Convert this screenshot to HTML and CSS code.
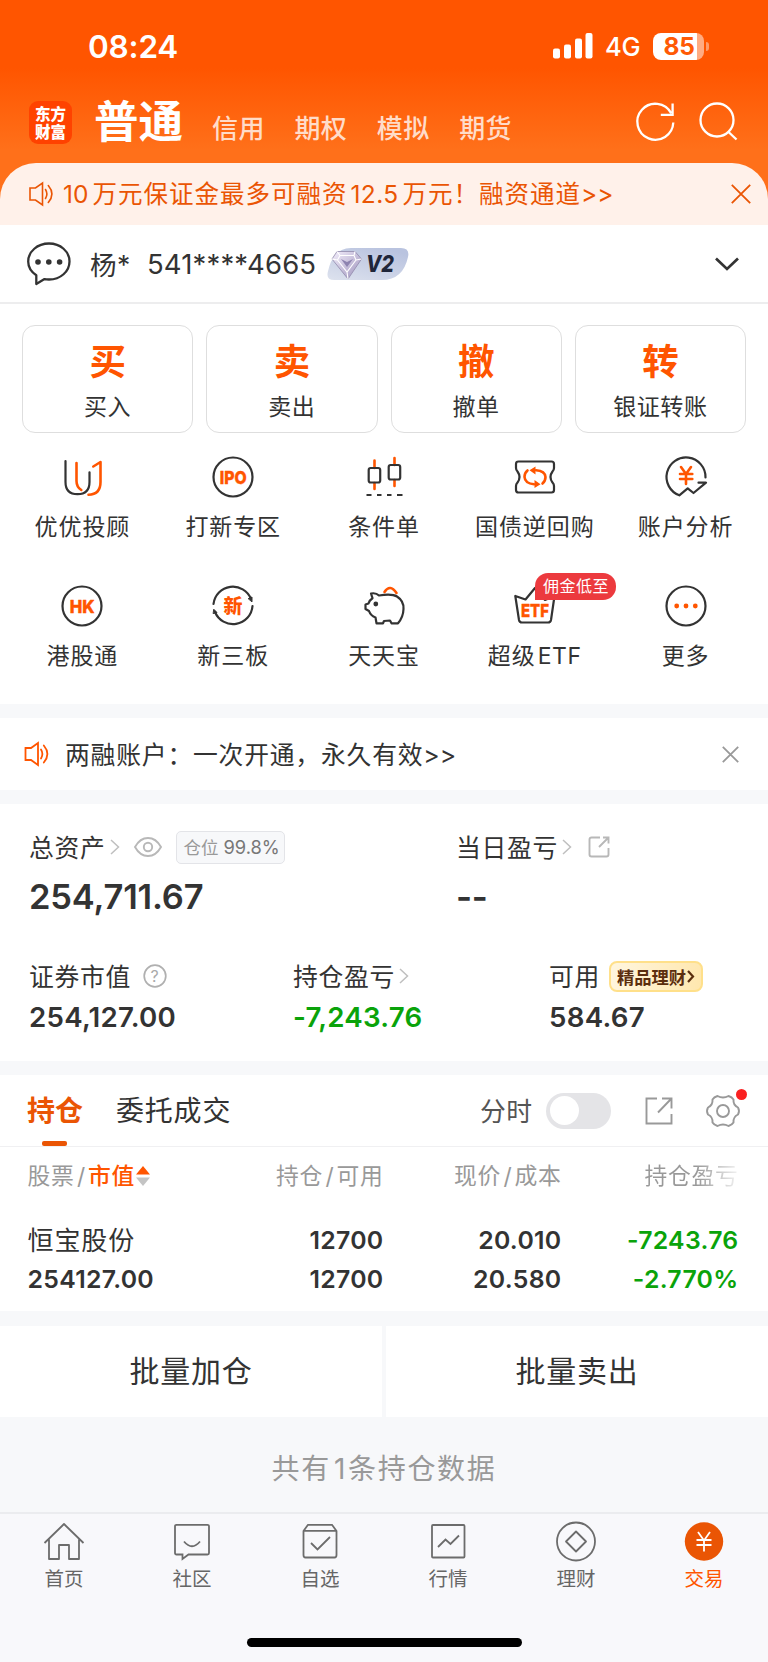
FILE: index.html
```html
<!DOCTYPE html>
<html lang="zh-CN">
<head>
<meta charset="utf-8">
<title>交易</title>
<link rel="stylesheet" href="styles.css">
</head>
<body>
<div class="app">
  <header class="top">
    <div class="status">
      <span class="clock">08:24</span>
      <svg class="signal" width="40" height="26" viewBox="0 0 40 26" fill="#fff"><rect x="0" y="15.5" width="7" height="10" rx="2"/><rect x="11" y="11.5" width="7" height="14" rx="2"/><rect x="22" y="5.5" width="7" height="20" rx="2"/><rect x="32.5" y="0" width="7" height="25.500" rx="2"/></svg>
      <span class="net">4G</span>
      <div class="battery"><span class="level">85</span></div>
      <span class="nub"></span>
    </div>
    <nav class="accounts">
      <div class="logo">东方<br>财富</div>
      <span class="acct-main">普通</span>
      <span class="acct">信用</span><span class="acct">期权</span><span class="acct">模拟</span><span class="acct">期货</span>
      <svg class="refresh" width="40" height="42" viewBox="0 0 40 42" fill="none" stroke="#fff" stroke-width="2.3"><path d="M37.300 21.500A18 18 0 1 1 35.200 12.300M36.600 2.500V13.800H24.800"/></svg>
      <svg class="search" width="40" height="42" viewBox="0 0 40 42" fill="none" stroke="#fff" stroke-width="2.3"><circle cx="18" cy="19" r="16.500"/><path d="M29 30.500L37.500 38.500"/></svg>
    </nav>
    <div class="promo">
      <svg class="speaker" width="25" height="24" viewBox="0 0 25 24" fill="none" stroke="#ea5504" stroke-width="1.600"><path d="M1 6H6.500L13.500 1V23L6.500 18H1Z"/><path d="M16.500 7.500Q19.300 12 16.500 16.500M19.300 3.500Q26.500 12 19.300 20.500" stroke-linecap="round"/></svg>
      <span class="promo-text"><span class="num">10</span>万元保证金最多可融资<span class="num mid">12.5</span>万元！融资通道<span class="arrows">&gt;&gt;</span></span>
      <svg class="promo-close" width="20" height="20" viewBox="0 0 20 20" stroke="#ea5504" stroke-width="1.800"><path d="M.8.8L19.200 19.200M19.200.8L.8 19.200"/></svg>
    </div>
  </header>

  <section class="user">
    <svg width="44" height="44" viewBox="0 0 44 44" fill="none" stroke="#333" stroke-width="2.300" stroke-linejoin="round"><path d="M9.300 33.300C4.500 30 1.200 25 1.200 19.500C1.200 9.500 10.500 1.500 22 1.500S42.500 9.500 42.500 19.500S33.500 37.500 22 37.500C20.200 37.500 18.700 37.400 17.500 37.100L9.300 42Z"/><g fill="#333" stroke="none"><circle cx="11" cy="20" r="2.800"/><circle cx="21.800" cy="20" r="2.800"/><circle cx="32.600" cy="20" r="2.800"/></g></svg>
    <span class="user-name">杨*</span>
    <span class="user-id">541****4665</span>
    <svg class="vip" width="82" height="34" viewBox="0 0 82 34">
      <defs>
        <linearGradient id="vipbg" x1="0" y1="1" x2=".7" y2="0"><stop offset="0" stop-color="#dde2ee"/><stop offset="1" stop-color="#b9c3df"/></linearGradient>
        <linearGradient id="gem" x1="0" y1="0" x2="1" y2="1"><stop offset="0" stop-color="#f4effc"/><stop offset="1" stop-color="#9c91bb"/></linearGradient>
      </defs>
      <path d="M24 1H74Q83 1 81 10Q76 33 55 33H7Q-1 33 .8 25Q6 1 24 1Z" fill="url(#vipbg)"/>
      <path d="M10 4.500H28L34.500 12L21 32L5 12Z" fill="url(#gem)" stroke="#9189ab" stroke-width=".8"/>
      <path d="M10 4.500L13 8.500H27L28 4.500M13 8.500L10.500 13L20 25L29 13L27 8.500M5 12L10.500 13M34.500 12L29 13M20 25L21 32" fill="none" stroke="#fff" stroke-width="1.100"/>
      <path d="M14 12L20 20L26 12L20 15Z" fill="#8d83af"/>
      <text x="39" y="25" class="vip-text" textLength="28" lengthAdjust="spacingAndGlyphs">V2</text>
    </svg>
    <svg class="expand" width="24" height="14" viewBox="0 0 24 14" fill="none" stroke="#333" stroke-width="2.700"><path d="M1 1.500L12 12L23 1.500"/></svg>
  </section>

  <section class="trade">
    <div class="actions">
      <div class="action"><b>买</b><span>买入</span></div>
      <div class="action"><b>卖</b><span>卖出</span></div>
      <div class="action"><b>撤</b><span>撤单</span></div>
      <div class="action"><b>转</b><span>银证转账</span></div>
    </div>
    <div class="tools">
      <div class="tool">
        <svg class="ico" viewBox="0 0 44 44"><path d="M5.500 6V27Q5.500 39.200 17.500 39.200T29.500 27V17.300"/><path class="o" d="M16.500 8V26Q16.500 32 21.300 35M28.500 39.700Q40.500 39.500 40.500 27V7L33.300 11.500"/></svg>
        <span>优优投顾</span></div>
      <div class="tool">
        <svg class="ico" viewBox="0 0 44 44"><circle cx="22" cy="22" r="19.500"/><text x="8.700" y="28.500" textLength="27" lengthAdjust="spacingAndGlyphs">IPO</text></svg>
        <span>打新专区</span></div>
      <div class="tool">
        <svg class="ico" viewBox="0 0 44 44"><path class="o" d="M12.500 5.500V13M12.500 28V34M32.500 3V10M32.500 25V31"/><rect x="6.700" y="13" width="11.500" height="14.500" rx="2"/><rect x="26.700" y="10" width="11.500" height="14.500" rx="2"/><path d="M4.500 40H9.500M15 40H19.500M25 40H29.500M35 40H40.500" stroke-linecap="butt"/></svg>
        <span>条件单</span></div>
      <div class="tool">
        <svg class="ico" viewBox="0 0 44 44"><path d="M5.500 6.500H38.500Q41 6.500 41 9V13Q41 15 39.500 16.500Q35.500 22 39.500 27.500Q41 29 41 31V35Q41 37.500 38.500 37.500H5.500Q3 37.500 3 35V31Q3 29 4.500 27.500Q8.500 22 4.500 16.500Q3 15 3 13V9Q3 6.500 5.500 6.500Z"/><path class="o" d="M14.500 15.500Q11.500 18 11.500 22Q12 28.500 21 29.200M29.500 28.500Q32.500 26 32.500 22Q32 15.800 23 15.200"/><path class="of" d="M16.500 15.300L22.500 11.500V19.500ZM27.500 29.200L21.500 25V33Z"/></svg>
        <span>国债逆回购</span></div>
      <div class="tool">
        <svg class="ico" viewBox="0 0 44 44"><path d="M41.500 22.500A19.500 19.500 0 1 0 15.300 40.300L23.700 33.300L29.500 38L42 27.700H34.500"/><path class="o" d="M17 12L22 19L27 12M22 19V29M16 19H28.300M16 24H28.300" stroke-width="2.700"/></svg>
        <span>账户分析</span></div>
      <div class="tool">
        <svg class="ico" viewBox="0 0 44 44"><circle cx="22" cy="22" r="19.500"/><text x="9.700" y="28.500" textLength="25" lengthAdjust="spacingAndGlyphs">HK</text></svg>
        <span>港股通</span></div>
      <div class="tool">
        <svg class="ico" viewBox="0 0 44 44"><path d="M2.500 20A19.500 19.500 0 0 1 40 15M41.500 22A19.500 19.500 0 0 1 4 28"/><path class="k" d="M37.500 14.500L41 13V17.500ZM3 25.500L6 28.500L2.500 29.500Z"/><text x="12.500" y="29" class="cjk">新</text></svg>
        <span>新三板</span></div>
      <div class="tool">
        <svg class="ico" viewBox="0 0 44 44"><path class="o" d="M22.500 8Q28 -.5 34.500 9"/><path d="M9 9.500Q14 8.500 17 11.500Q30 9.500 35 12.500Q42 17 41.500 25Q41.300 33 36 39.300H29.500L28 36.500L22 37L21 39.300H14.500L13.500 33.500Q8.500 31.500 7 27L3.500 25V20.500L6.500 19.500Q7.500 16 10.500 14.200Z"/><circle class="kd" cx="13.800" cy="20" r="2.400"/></svg>
        <span>天天宝</span></div>
      <div class="tool">
        <svg class="ico" viewBox="0 0 44 44"><path d="M2.300 12L6 36Q6.500 38.500 9 38.500H35Q37.500 38.500 38 36L41.500 12L32 16L22 4L12.500 15.500Z"/><text x="8" y="32.500" class="etf" textLength="28" lengthAdjust="spacingAndGlyphs">ETF</text></svg>
        <span>超级<span class="latin">ETF</span></span><em class="bubble">佣金低至</em></div>
      <div class="tool">
        <svg class="ico" viewBox="0 0 44 44"><circle cx="22" cy="22" r="19.500"/><g class="of"><circle cx="12.700" cy="22" r="2.400"/><circle cx="22" cy="22" r="2.400"/><circle cx="31.300" cy="22" r="2.400"/></g></svg>
        <span>更多</span></div>
    </div>
  </section>

  <section class="notice">
    <svg class="speaker" width="26" height="24" viewBox="0 0 25 24" fill="none" stroke="#ff5500" stroke-width="1.800"><path d="M1 6H6.500L13.500 1V23L6.500 18H1Z"/><path d="M16.500 7.500Q19.300 12 16.500 16.500M19.300 3.500Q26.500 12 19.300 20.500" stroke-linecap="round"/></svg>
    <span class="notice-text">两融账户：一次开通，永久有效<span class="arrows">&gt;&gt;</span></span>
    <svg class="notice-close" width="17" height="17" viewBox="0 0 17 17" stroke="#999" stroke-width="1.800"><path d="M.8.8L16.200 16.200M16.200.8L.8 16.200"/></svg>
  </section>

  <section class="assets">
    <div class="asset total">
      <div class="label"><span>总资产</span><svg class="chev" viewBox="0 0 10 16"><path d="M1 1L8.500 8L1 15"/></svg>
        <svg class="eye" width="28" height="20" viewBox="0 0 28 20" fill="none" stroke="#b8b8b8" stroke-width="1.900"><path d="M1 10Q6 1 14 1T27 10Q22 19 14 19T1 10Z"/><circle cx="14" cy="10" r="4.200"/></svg>
        <div class="ratio">仓位 <i>99.8%</i></div></div>
      <div class="value big">254,711.67</div>
    </div>
    <div class="asset today">
      <div class="label"><span>当日盈亏</span><svg class="chev" viewBox="0 0 10 16"><path d="M1 1L8.500 8L1 15"/></svg>
        <svg class="share" width="22" height="22" viewBox="0 0 22 22" fill="none" stroke="#b8b8b8" stroke-width="1.900"><path d="M12 1.500H3.500Q1.500 1.500 1.500 3.500V18.500Q1.500 20.500 3.500 20.500H18.500Q20.500 20.500 20.500 18.500V12M15 1.500H20.500V7.500M20 2L11 11"/></svg></div>
      <div class="value big">--</div>
    </div>
    <div class="asset market">
      <div class="label"><span>证券市值</span><svg class="help" width="24" height="24" viewBox="0 0 24 24"><circle cx="12" cy="12" r="10.800"/><text x="12" y="17.700" text-anchor="middle">?</text></svg></div>
      <div class="value">254,127.00</div>
    </div>
    <div class="asset profit">
      <div class="label"><span>持仓盈亏</span><svg class="chev" viewBox="0 0 10 16"><path d="M1 1L8.500 8L1 15"/></svg></div>
      <div class="value green">-7,243.76</div>
    </div>
    <div class="asset avail">
      <div class="label"><span>可用</span><div class="wealth">精品理财<svg width="8" height="13" viewBox="0 0 8 13" fill="none" stroke="#5b2e0e" stroke-width="2.200"><path d="M1 1L6 6.500L1 12"/></svg></div></div>
      <div class="value">584.67</div>
    </div>
  </section>

  <section class="holdings">
    <div class="tabs">
      <span class="tab active">持仓</span>
      <span class="tab other">委托成交</span>
      <span class="trend">分时</span>
      <span class="toggle"></span>
      <svg class="export" width="28" height="28" viewBox="0 0 28 28" fill="none" stroke="#999" stroke-width="1.900"><path d="M12 1.500H1.500V26.500H26.500V17M17 1.500H26.500V11.500M26 2L13 15.500"/></svg>
      <span class="settings"><svg width="34" height="34" viewBox="0 0 34 34" fill="none" stroke="#999" stroke-width="1.900" stroke-linejoin="round"><path d="M11.500 2Q17 5 22.500 2Q26 3 27.500 5.500Q27 11 32 13.500Q34 17 32 20.500Q27 23 27.500 28.500Q26 31 22.500 32Q17 29 11.500 32Q8 31 6.500 28.500Q7 23 2 20.500Q0 17 2 13.500Q7 11 6.500 5.500Q8 3 11.500 2Z"/><circle cx="17" cy="17" r="6"/></svg><i class="dot"></i></span>
    </div>
    <div class="grid head">
      <span>股票<u>/</u><b>市值</b><svg width="14" height="20" viewBox="0 0 14 20"><path d="M7 0L14 8.500H0Z" fill="#ff5500"/><path d="M0 11.500H14L7 20Z" fill="#c4c4c4"/></svg></span>
      <span>持仓<u>/</u>可用</span><span>现价<u>/</u>成本</span><span class="fade">持仓盈亏</span>
    </div>
    <div class="grid row">
      <span class="stock">恒宝股份</span><span>12700</span><span>20.010</span><span class="green">-7243.76</span>
      <span>254127.00</span><span>12700</span><span>20.580</span><span class="green">-2.770%</span>
    </div>
  </section>

  <section class="batch"><span>批量加仓</span><span>批量卖出</span></section>
  <p class="count">共有<span>1</span>条持仓数据</p>

  <nav class="tabbar">
    <div class="item"><svg viewBox="0 0 42 42"><path d="M1.500 22L21 3L40.500 22M6 18.500V38H16V24H26V38H36V18.500" stroke-linejoin="round"/></svg><span>首页</span></div>
    <div class="item"><svg viewBox="0 0 42 42"><path d="M5.500 3.800H36.500Q38 3.800 38 5.300V32Q38 33.500 36.500 33.500H17.500L11.500 38V33.500H5.500Q4 33.500 4 32V5.300Q4 3.800 5.500 3.800ZM13 20.500Q21 30 29 20.500"/></svg><span>社区</span></div>
    <div class="item"><svg viewBox="0 0 42 42"><path d="M4.500 10L9 3.800H33L37.500 10V34Q37.500 36.500 35.500 36.500H6.500Q4.500 36.500 4.500 34ZM5 9.800H37M12 22L18.500 28.500L31 16"/></svg><span>自选</span></div>
    <div class="item"><svg viewBox="0 0 42 42"><rect x="5" y="4" width="32.500" height="32.500" rx="1"/><path d="M11 26L18.500 18.500L23.500 23L32 14.500"/></svg><span>行情</span></div>
    <div class="item"><svg viewBox="0 0 42 42"><circle cx="21" cy="20.500" r="19"/><path d="M21 10.500L31 20.500L21 30.500L11 20.500Z" stroke-linejoin="round"/></svg><span>理财</span></div>
    <div class="item on"><svg viewBox="0 0 42 42"><circle cx="21" cy="20.500" r="19.200" fill="#ea5504" stroke="none"/><path d="M15 11L21 19.500L27 11M21 19V30.500M13.500 19H28.500M13.500 24H28.500" stroke="#fff"/></svg><span>交易</span></div>
  </nav>
  <div class="home"><span></span></div>
</div>
</body>
</html>
```
FILE: styles.css
```css
* { box-sizing: border-box; }
body {
  margin: 0;
  background: #f7f8fa;
  color: #333;
  font-family: Inter, "Noto Sans CJK SC", sans-serif;
}
svg { display: block; flex: none; overflow: visible; }
.app { width: 768px; height: 1662px; display: flex; flex-direction: column; overflow: hidden; white-space: nowrap; }
.app > * { flex: none; }

/* header */
.top { height: 225px; background: linear-gradient(#ff5500 0, #ff5500 68px, #ff701a 150px, #ff701a 225px); }
.status { height: 92px; padding-left: 88px; display: flex; align-items: center; color: #fff; }
.clock { width: 465px; font-size: 31.500px; font-weight: 600; letter-spacing: -.2px; }
.net { width: 48px; margin-left: 12px; font-size: 25.500px; font-weight: 500; letter-spacing: -.2px; padding-top: 1px; }
.battery { width: 51px; height: 27px; border-radius: 8px; background: linear-gradient(90deg, #fff 44px, #ffab82 44px); display: flex; align-items: center; padding-left: 10.500px; }
.level { color: #ff5a05; font-size: 24.500px; font-weight: 700; letter-spacing: -.1px; }
.nub { width: 3px; height: 9px; margin-left: 2px; border-radius: 0 4px 4px 0; background: #ff9a69; }
.accounts { height: 71px; padding-left: 29px; display: flex; align-items: flex-start; color: #fff; }
.logo { width: 43px; height: 43px; margin: 9px 22px 0 0; padding-top: 3px; border-radius: 9px; background: #ff4200; text-align: center; font: 900 15.500px/18px "Noto Sans CJK SC", sans-serif; }
.acct-main { width: 118px; font-size: 44.500px; line-height: 60px; font-weight: 700; }
.acct { width: 82.400px; font-size: 26px; line-height: 74px; font-weight: 500; letter-spacing: .4px; color: #ffdcc9; }
.refresh { margin: 9px 0 0 94px; }
.search { margin: 9px 0 0 23px; }
.promo { height: 62px; padding-left: 29px; border-radius: 36px 36px 0 0; background: #fff1ea; display: flex; align-items: center; color: #ea5504; }
.promo-text { width: 668px; margin-left: 9px; padding-bottom: 3px; font-size: 24.500px; letter-spacing: 1px; }
.promo-text .num { letter-spacing: 0; margin-right: 4px; }
.promo-text .mid { margin-left: 3px; letter-spacing: .4px; }
.promo-text .arrows, .arrows { letter-spacing: 0; }

/* account */
.user { height: 79px; padding-left: 27px; border-bottom: 2px solid #ededee; background: #fff; display: flex; align-items: center; }
.user-name { width: 57px; margin-left: 19px; font-size: 26.500px; letter-spacing: .5px; }
.user-id { width: 180px; font-size: 27.500px; letter-spacing: .15px; }
.vip-text { font: italic 800 23.500px Inter, sans-serif; fill: #20263a; }
.expand { margin-left: 306px; }

/* trade tools */
.trade { height: 400px; padding-top: 21px; background: #fff; }
.actions { padding: 0 22px; display: grid; grid-template-columns: repeat(4, 1fr); gap: 13px; }
.action { height: 108px; border: 1.500px solid #dedede; border-radius: 13px; display: flex; flex-direction: column; align-items: center; }
.action b { margin-top: 11px; color: #ff5500; font-size: 36.500px; line-height: 50px; }
.action span { margin-top: 4px; font-size: 23px; line-height: 32px; letter-spacing: .6px; }
.tools { padding: 22px 7px 0; display: grid; grid-template-columns: repeat(5, 1fr); grid-auto-rows: 129px; }
.tool { position: relative; display: flex; flex-direction: column; align-items: center; font-size: 23px; line-height: 32px; letter-spacing: .9px; }
.tool > span { margin-top: 12px; }
.latin { margin-left: 2px; letter-spacing: .6px; }
.ico { width: 44px; height: 44px; fill: none; stroke: #333; stroke-width: 2.200; stroke-linecap: round; stroke-linejoin: round; }
.ico .o { stroke: #ff5500; stroke-width: 2.600; }
.ico .of { fill: #ff5500; stroke: none; }
.ico .k { fill: #333; stroke-width: 1; }
.ico .kd { fill: #333; stroke: none; }
.ico text { fill: #ff5500; stroke: #ff5500; stroke-width: .4; font: 800 18px Inter, sans-serif; letter-spacing: 0; }
.ico .cjk { font: 900 19px "Noto Sans CJK SC", sans-serif; stroke-width: 0; }
.bubble { position: absolute; left: 76px; top: -11px; width: 81px; height: 27px; border-radius: 13px 13px 13px 0; background: #ec3a3e; color: #fff; font-style: normal; font-size: 16px; line-height: 27px; letter-spacing: .5px; text-align: center; }

/* notice */
.notice { height: 72px; margin: 14px 0; padding-left: 24px; background: #fff; display: flex; align-items: center; }
.notice-text { width: 657px; margin-left: 15px; padding-bottom: 3px; font-size: 24.800px; letter-spacing: .8px; }

/* assets */
.assets { height: 257px; background: #fff; display: grid; grid-template-columns: 29px 264px 163px 93px 1fr; grid-template-rows: 129px 128px; padding-top: 27px; }
.total { grid-column: 2 / 4; }
.today { grid-column: 4 / 6; }
.market { grid-column: 2; }
.profit { grid-column: 3 / 5; }
.avail { grid-column: 5; }
.label { height: 32px; display: flex; align-items: center; font-size: 24.800px; letter-spacing: .7px; }
.label > span { padding-bottom: 2px; }
.value { margin-top: 8px; font-size: 27.700px; line-height: 34px; font-weight: 600; letter-spacing: .25px; }
.big { margin-top: 14px; font-size: 34.500px; line-height: 40px; letter-spacing: -.2px; }
.green { color: #0aa30a; }
.chev { width: 10px; height: 16px; margin-left: 4px; fill: none; stroke: #bfbfbf; stroke-width: 1.500; }
.eye { margin-left: 14px; }
.ratio { height: 33px; margin-left: 14px; padding: 0 4px 0 7px; border: 1.500px solid #e3e4e8; border-radius: 5px; background: #f7f8fa; color: #999; font-size: 17.500px; line-height: 31px; letter-spacing: 0; }
.ratio i { font-style: normal; font-size: 18.300px; color: #777; }
.share { margin-left: 16px; }
.help { margin-left: 12px; fill: none; stroke: #b0b0b0; stroke-width: 1.700; }
.help text { fill: #aaa; stroke: none; font: 16px Inter, sans-serif; }
.wealth { height: 31px; margin-left: 9px; padding: 0 6px; border: 2px solid #ffe08a; border-radius: 8px; background: linear-gradient(100deg, #fff6df, #ffe7ae); display: flex; align-items: center; gap: 1px; color: #5b2e0e; font-size: 17.300px; font-weight: 700; letter-spacing: 0; }

/* holdings */
.holdings { height: 236px; margin-top: 14px; background: #fff; }
.tabs { height: 72px; padding-left: 27px; border-bottom: 1.500px solid #f0f0f2; display: flex; align-items: center; }
.tab { font-size: 28px; letter-spacing: .8px; }
.other { width: 364px; padding-bottom: 3px; }
.active { position: relative; width: 89px; height: 100%; line-height: 73px; letter-spacing: 0; font-weight: 700; color: #ea5504; }
.active::after { content: ""; position: absolute; left: 15px; bottom: 0; width: 25px; height: 5px; border-radius: 2px; background: #ea5504; }
.trend { width: 66px; padding-bottom: 2px; font-size: 25.800px; letter-spacing: .5px; color: #555; }
.toggle { width: 65px; height: 36px; border-radius: 18px; background: #e4e4e7; padding: 3.500px 4px; }
.toggle::before { content: ""; display: block; width: 29px; height: 29px; border-radius: 50%; background: #fff; }
.export { margin-left: 34px; }
.settings { position: relative; margin-left: 33px; }
.dot { position: absolute; right: -7px; top: -5px; width: 11px; height: 11px; border-radius: 50%; background: #fa2020; }
.grid { display: grid; grid-template-columns: 234px 122px 178px 177px; padding-left: 27.500px; text-align: right; }
.head { height: 58px; line-height: 58px; font-size: 22.800px; letter-spacing: .7px; color: #999; }
.head span:first-child { display: flex; align-items: center; }
.head u { margin: 0 2px 0 2.500px; text-decoration: none; }
.head b { font-weight: 500; color: #ff5500; margin-right: 1px; }
.head .fade { background: linear-gradient(90deg, #999 76%, #f4f4f4 100%); -webkit-background-clip: text; background-clip: text; color: transparent; }
.row { padding-top: 16px; line-height: 39px; font-size: 24.800px; font-weight: 600; letter-spacing: .3px; }
.row span:nth-child(4n + 1) { text-align: left; }
.row .stock { font-size: 26px; font-weight: 400; letter-spacing: .9px; }

/* batch actions */
.batch { height: 90px; margin-top: 15px; display: grid; grid-template-columns: 1fr 1fr; gap: 4px; line-height: 91px; }
.batch span { background: #fff; text-align: center; font-size: 30px; letter-spacing: .8px; }
.count { margin: 0; height: 96px; line-height: 107px; text-align: center; font-size: 28px; letter-spacing: 1.700px; color: #999; }
.count span { margin: 0 1px 0 3px; }

/* bottom bar */
.tabbar { height: 110px; padding-top: 7px; border-top: 2px solid #ebecef; background: #f8f8fb; display: grid; grid-template-columns: repeat(6, 1fr); }
.item { display: flex; flex-direction: column; align-items: center; color: #666; font-size: 19.500px; line-height: 28px; }
.item svg { width: 42px; height: 42px; fill: none; stroke: #6c6c6c; stroke-width: 1.800; }
.item span { margin-top: 2px; }
.on { color: #ff5500; }
.home { flex: 1; display: flex; justify-content: center; padding-top: 16px; background: #f8f8fb; }
.home span { width: 275px; height: 9px; border-radius: 5px; background: #000; }
```
